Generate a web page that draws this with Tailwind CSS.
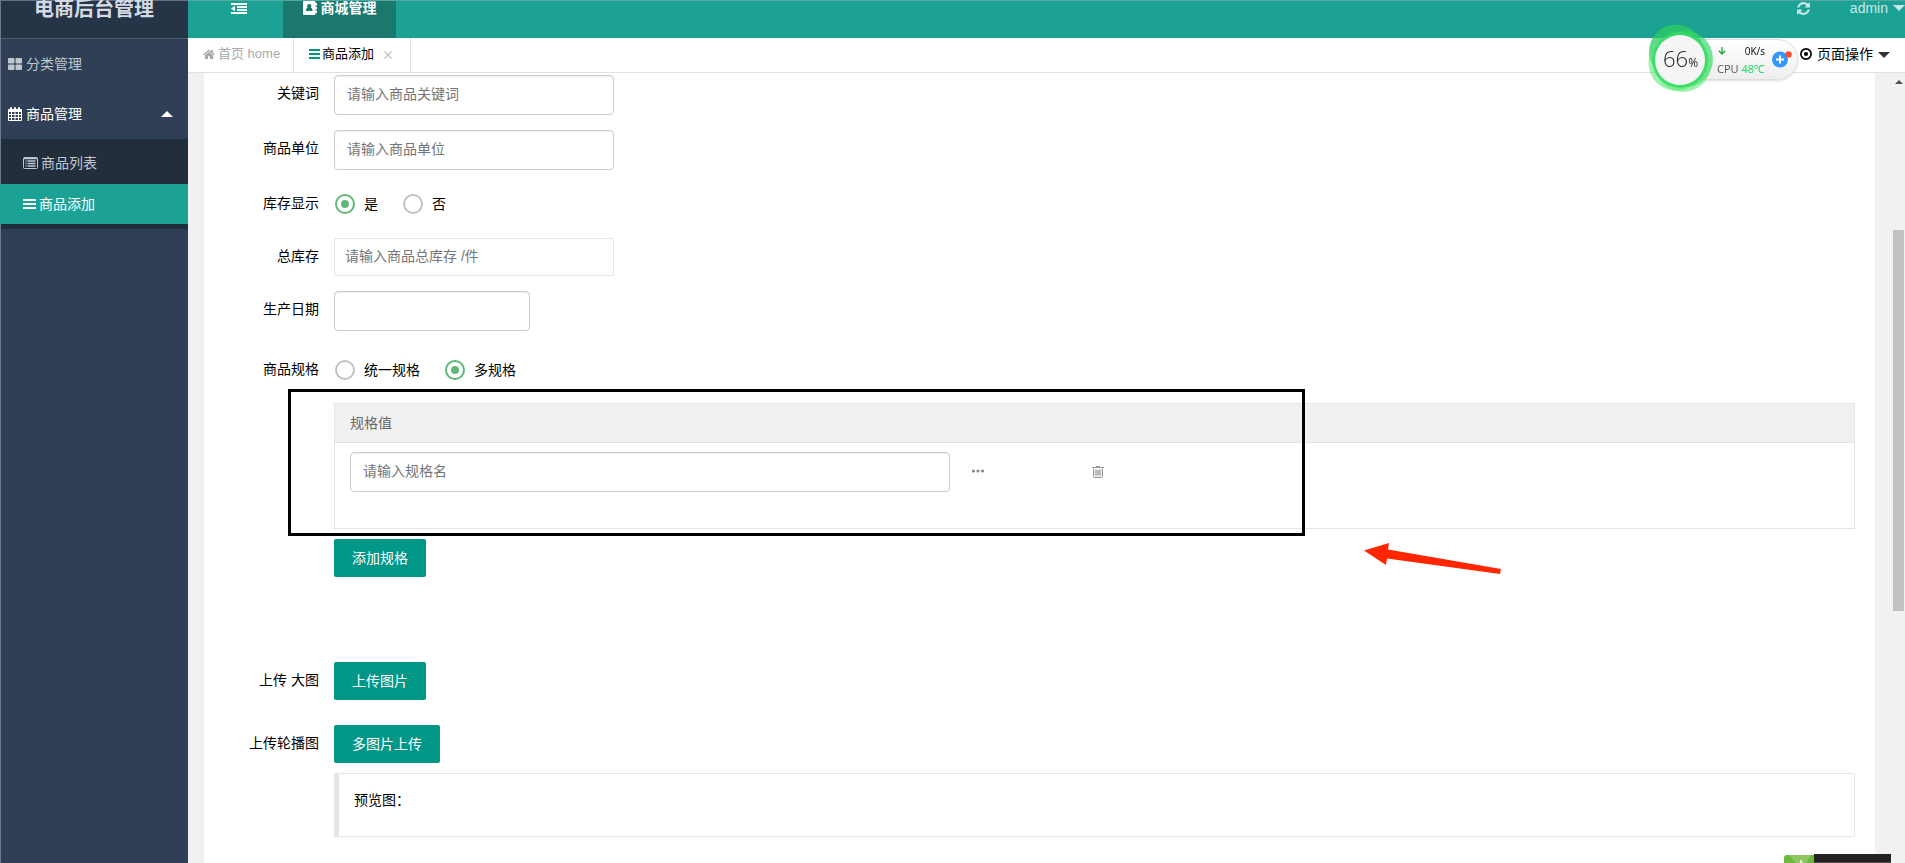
<!DOCTYPE html>
<html lang="zh-CN">
<head>
<meta charset="utf-8">
<meta name="viewport" content="width=device-width, initial-scale=1">
<title>电商后台管理</title>
<script src="https://cdn.jsdelivr.net/npm/@tailwindcss/browser@4"></script>
</head>
<body class="flex min-h-screen bg-[#f1f1f1] font-['Liberation_Sans','Noto_Sans_CJK_SC',sans-serif] text-sm text-black">

<!-- Sidebar -->
<aside class="flex w-[188px] shrink-0 flex-col border-l border-[#6d7988] bg-[#2f4056] text-[#c1c6cd]">
  <h1 class="flex h-[39px] items-start justify-center border-t border-b border-t-[#66717e] border-b-[#4f5d6e] bg-[#253446] pr-px text-xl leading-4 font-bold text-[#d5d9e2]">电商后台管理</h1>
  <nav class="flex flex-col">
    <a href="#" class="flex h-[49px] items-center gap-1 pl-[7px]">
      <svg class="h-3 w-3.5" viewBox="0 0 14 12" fill="currentColor"><rect width="6.5" height="5.5" rx="1"/><rect x="7.5" width="6.5" height="5.5" rx="1"/><rect y="6.5" width="6.5" height="5.5" rx="1"/><rect x="7.5" y="6.5" width="6.5" height="5.5" rx="1"/></svg>
      分类管理
    </a>
    <a href="#" class="flex h-[51px] items-center gap-1 pr-[15px] pl-[7px] text-white">
      <svg class="h-3.5 w-3.5" viewBox="0 0 14 14" fill="currentColor"><path fill-rule="evenodd" d="M1 2h1V1a1 1 0 0 1 2 0v1h2V1a1 1 0 0 1 2 0v1h2V1a1 1 0 0 1 2 0v1h1a1 1 0 0 1 1 1v10a1 1 0 0 1-1 1H1a1 1 0 0 1-1-1V3a1 1 0 0 1 1-1zM1 5v2h2V5zm3 0v2h2.500V5zm3.500 0v2H10V5zM11 5v2h2V5zM1 8v2h2V8zm3 0v2h2.500V8zm3.500 0v2H10V8zM11 8v2h2V8zM1 11v2h2v-2zm3 0v2h2.500v-2zm3.500 0v2H10v-2zM11 11v2h2v-2z"/></svg>
      商品管理
      <svg class="ml-auto h-1.5 w-3" viewBox="0 0 12 6" fill="currentColor"><path d="M0 6 6 0l6 6z"/></svg>
    </a>
    <div class="flex flex-col bg-[#232e3d] py-[5px]">
      <a href="#" class="flex h-10 items-center gap-[3px] pb-0.5 pl-[22px]">
        <svg class="h-3 w-[15px]" viewBox="0 0 15 12"><rect x=".5" y=".5" width="14" height="11" rx="1" fill="none" stroke="currentColor"/><path d="M1 1.500h13M2.500 4h1M4.500 4h8M2.500 6.500h1M4.500 6.500h8M2.500 9h1M4.500 9h8" stroke="currentColor" stroke-width="1.300"/></svg>
        商品列表
      </a>
      <a href="#" class="-ml-px flex h-10 items-center gap-[3px] bg-[#1ca195] pb-px pl-[23px] text-white">
        <svg class="h-2.5 w-[13px]" viewBox="0 0 13 10" fill="currentColor"><rect width="13" height="2" rx=".5"/><rect y="4" width="13" height="2" rx=".5"/><rect y="8" width="13" height="2" rx=".5"/></svg>
        商品添加
      </a>
    </div>
  </nav>
</aside>

<div class="flex min-w-0 flex-1 flex-col">
  <!-- Top bar -->
  <header class="flex h-[38px] items-start border-t border-[#55a8a1] bg-[#1ca195] text-white">
    <button type="button" aria-label="折叠菜单" class="flex h-full w-[95px] items-start justify-center pt-0.5 pl-[7px]">
      <svg class="h-[11px] w-4" viewBox="0 0 16 11" fill="currentColor"><path d="M0 0h16v2H0zM6 3h10v2H6zM6 6h10v2H6zM0 9h16v2H0zM0 5.500 4 2.800v5.400z"/></svg>
    </button>
    <a href="#" class="flex h-full w-[113px] items-start justify-center gap-1 bg-[#1a786f] font-bold leading-[14px]">
      <svg class="h-3.5 w-3.5" viewBox="0 0 14 14" fill="currentColor"><path fill-rule="evenodd" d="M1 0h10.500a1 1 0 0 1 1 1v12a1 1 0 0 1-1 1H1a1 1 0 0 1-1-1V1a1 1 0 0 1 1-1zM6.200 3a2 2 0 0 0-1.500 3.400C3.500 6.900 3 8 3 10h6.500c0-2-.5-3.100-1.700-3.600A2 2 0 0 0 6.200 3z"/><path d="M12 2h2v2.500h-2zM12 5.700h2v2.500h-2zM12 9.400h2V12h-2z"/></svg>
      商城管理
    </a>
    <div class="ml-auto flex items-start text-[#c9e8e5]">
      <button type="button" aria-label="刷新" class="mr-[39px] flex">
        <svg class="h-[15px] w-[15px]" viewBox="0 0 1792 1792" fill="currentColor"><path d="M1639 1056q0 5-1 7-64 268-268 434.500t-478 166.500q-146 0-282.500-55t-243.500-157l-129 129q-19 19-45 19t-45-19-19-45v-448q0-26 19-45t45-19h448q26 0 45 19t19 45-19 45l-137 137q71 66 161 102t187 36q134 0 250-65t186-179q11-17 53-117 8-23 30-23h192q13 0 22.500 9.500t9.500 22.500zm25-800v448q0 26-19 45t-45 19h-448q-26 0-45-19t-19-45 19-45l138-138q-148-137-349-137-134 0-250 65t-186 179q-11 17-53 117-8 23-30 23h-199q-13 0-22.500-9.500t-9.500-22.500v-7q65-268 270-434.500t480-166.500q146 0 284 55.500t245 156.500l130-129q19-19 45-19t45 19 19 45z"/></svg>
      </button>
      <a href="#" class="flex items-center gap-[5px] leading-[14px]">admin
        <svg class="h-1.5 w-3" viewBox="0 0 12 6" fill="currentColor"><path d="M0 0h12L6 6z"/></svg>
      </a>
    </div>
  </header>

  <!-- Page tabs -->
  <div class="flex h-[35px] items-stretch border-b border-[#e2e2e2] bg-white text-[13px]">
    <a href="#" class="flex w-[106px] items-center gap-[3px] border-r border-[#e2e2e2] pb-0.5 pl-[15px] text-[#a8a8a8]">
      <svg class="h-[13px] w-3" viewBox="0 0 1664 1792" fill="currentColor"><path d="M1408 992v480q0 26-19 45t-45 19h-384v-384h-256v384h-384q-26 0-45-19t-19-45v-480q0-1 .5-3t.5-3l575-474 575 474q1 2 1 6zm223-69l-62 74q-8 9-21 11h-3q-13 0-21-7l-692-577-692 577q-12 8-24 7-13-2-21-11l-62-74q-8-10-7-23.500t11-21.500l719-599q32-26 76-26t76 26l244 204v-195q0-14 9-23t23-9h192q14 0 23 9t9 23v408l219 182q10 8 11 21.500t-7 23.500z"/></svg>
      首页 home
    </a>
    <div class="flex w-[117px] items-center gap-0.5 border-r border-[#e2e2e2] pb-0.5 pl-[15px]">
      <svg class="h-2.5 w-[11px] text-[#009688]" viewBox="0 0 11 10" fill="currentColor"><rect width="11" height="2"/><rect y="4" width="11" height="2"/><rect y="8" width="11" height="2"/></svg>
      <a href="#">商品添加</a>
      <button type="button" aria-label="关闭" class="ml-2 pt-0.5 text-[#c2c2c2]">
        <svg class="h-2 w-2" viewBox="0 0 8 8" fill="none" stroke="currentColor" stroke-width="1.200"><path d="M.5.5l7 7M7.500.5l-7 7"/></svg>
      </button>
    </div>
    <button type="button" class="mr-[15px] ml-auto flex items-center gap-[5px] pb-0.5 text-sm">
      <svg class="h-3 w-3" viewBox="0 0 11 11"><circle cx="5.500" cy="5.500" r="4.700" fill="none" stroke="currentColor" stroke-width="1.500"/><circle cx="5.500" cy="5.500" r="1.900" fill="currentColor"/></svg>
      页面操作
      <svg class="mt-0.5 h-1.5 w-3 text-[#333]" viewBox="0 0 12 6" fill="currentColor"><path d="M0 0h12L6 6z"/></svg>
    </button>
  </div>

  <!-- Form area -->
  <div class="flex flex-1">
    <main class="ml-4 min-w-0 flex-1 bg-white">
      <form class="grid grid-cols-[95px_minmax(0,1fr)] gap-x-[15px] px-5 pt-0.5 pb-5">
        <label for="kw" class="pt-2 text-right leading-5">关键词</label>
        <input id="kw" type="text" placeholder="请输入商品关键词" class="mb-[15px] h-10 w-[280px] rounded border border-[#ccc] px-3 pb-0.5 shadow-[inset_0_1px_1px_rgba(0,0,0,0.075)] placeholder:text-[#757575]">

        <label for="unit" class="pt-2 text-right leading-5">商品单位</label>
        <input id="unit" type="text" placeholder="请输入商品单位" class="mb-[15px] h-10 w-[280px] rounded border border-[#ccc] px-3 pb-0.5 shadow-[inset_0_1px_1px_rgba(0,0,0,0.075)] placeholder:text-[#757575]">

        <span id="stock-show" class="pt-2 text-right leading-5">库存显示</span>
        <div role="radiogroup" aria-labelledby="stock-show" class="mb-[15px] flex h-[38px] items-center gap-[25px] pl-px">
          <label class="flex items-center gap-[9px]"><input type="radio" name="show" checked class="flex h-5 w-5 appearance-none items-center justify-center rounded-full border-2 border-[#c2c2c2] checked:border-[#5fb878] checked:before:h-2 checked:before:w-2 checked:before:rounded-full checked:before:bg-[#5fb878]">是</label>
          <label class="flex items-center gap-[9px]"><input type="radio" name="show" class="flex h-5 w-5 appearance-none items-center justify-center rounded-full border-2 border-[#c2c2c2] checked:border-[#5fb878] checked:before:h-2 checked:before:w-2 checked:before:rounded-full checked:before:bg-[#5fb878]">否</label>
        </div>

        <label for="total" class="pt-2 text-right leading-5">总库存</label>
        <input id="total" type="text" placeholder="请输入商品总库存 /件" class="mb-[15px] h-[38px] w-[280px] rounded-xs border border-[#e6e6e6] px-2.5 pb-0.5 placeholder:text-[#757575]">

        <label for="date" class="pt-2 text-right leading-5">生产日期</label>
        <input id="date" type="text" class="mb-5 h-10 w-[196px] rounded border border-[#ccc] px-3 shadow-[inset_0_1px_1px_rgba(0,0,0,0.075)]">

        <span id="spec" class="pt-2 text-right leading-5">商品规格</span>
        <div role="radiogroup" aria-labelledby="spec" class="mb-[14px] flex h-[38px] items-center gap-[25px] pl-px">
          <label class="flex items-center gap-[9px]"><input type="radio" name="spec" class="flex h-5 w-5 appearance-none items-center justify-center rounded-full border-2 border-[#c2c2c2] checked:border-[#5fb878] checked:before:h-2 checked:before:w-2 checked:before:rounded-full checked:before:bg-[#5fb878]">统一规格</label>
          <label class="flex items-center gap-[9px]"><input type="radio" name="spec" checked class="flex h-5 w-5 appearance-none items-center justify-center rounded-full border-2 border-[#c2c2c2] checked:border-[#5fb878] checked:before:h-2 checked:before:w-2 checked:before:rounded-full checked:before:bg-[#5fb878]">多规格</label>
        </div>

        <section class="relative col-start-2 mb-[85px]">
          <div class="border border-[#e6e6e6]">
            <h2 class="h-[39px] border-b border-[#e2e2e2] bg-[#f1f1f1] pl-[15px] leading-[38px] text-[#666]">规格值</h2>
            <div class="flex items-center pt-[9px] pb-9 pl-[15px] text-[#999]">
              <input type="text" aria-label="规格名" placeholder="请输入规格名" class="h-10 w-[600px] rounded border border-[#ccc] px-3 pb-0.5 text-black shadow-[inset_0_1px_1px_rgba(0,0,0,0.075)] placeholder:text-[#757575]">
              <button type="button" aria-label="更多" class="ml-[22px]">
                <svg class="h-3 w-3" viewBox="0 0 12 12" fill="#8c8c8c"><circle cx="1.500" cy="5" r="1.600"/><circle cx="6" cy="5" r="1.600"/><circle cx="10.500" cy="5" r="1.600"/></svg>
              </button>
              <button type="button" aria-label="删除" class="ml-[108px]">
                <svg class="h-3 w-3" viewBox="0 0 12 12" fill="none" stroke="currentColor"><path d="M0 1.500h12M4 .5h4"/><path d="M1.500 2.500v8q0 1 1 1h7q1 0 1-1v-8" fill="#eee"/><path d="M4 4v5.500M6 4v5.500M8 4v5.500" stroke-width="1.200"/></svg>
              </button>
            </div>
          </div>
          <button type="button" class="mt-[10px] h-[38px] rounded-xs bg-[#009688] px-[18px] text-white">添加规格</button>

          <!-- Callout frame and arrow -->
          <div class="pointer-events-none absolute -top-3.5 -left-[46px] h-[147px] w-[1017px] border-3 border-black"></div>
          <svg class="pointer-events-none absolute top-[139px] left-[1030px] h-8 w-[138px]" viewBox="0 0 138 32" fill="#ff2600"><path d="M0 8.500 25 1l-1 6.500L137 27l-1 5L23 16.500 22 23z"/></svg>
        </section>

        <label for="single" class="pt-2 text-right leading-5">上传 大图</label>
        <div class="mb-[25px]"><button id="single" type="button" class="block h-[38px] rounded-xs bg-[#009688] px-[18px] text-white">上传图片</button></div>

        <label for="multi" class="pt-2 text-right leading-5">上传轮播图</label>
        <div class="mb-[10px]"><button id="multi" type="button" class="block h-[38px] rounded-xs bg-[#009688] px-[18px] text-white">多图片上传</button></div>

        <blockquote class="col-start-2 h-16 rounded-r-xs border border-l-[5px] border-[#e6e6e6] px-[15px] pt-[15px] leading-[22px]">预览图：</blockquote>
      </form>
    </main>
    <!-- Gutter and scrollbar -->
    <div class="flex w-[30px] shrink-0 flex-col items-end pt-[7px] pr-px">
      <svg class="mr-px h-1 w-2" viewBox="0 0 8 4" fill="#505050"><path d="M0 4 4 0l4 4z"/></svg>
      <div class="mt-[146px] h-[381px] w-[11px] bg-[#c1c1c1]"></div>
    </div>
  </div>
</div>

<!-- System monitor widget -->
<div class="fixed top-6 right-[107px] h-[68px] w-[150px] font-['Open_Sans','Noto_Sans',sans-serif]">
  <div class="absolute top-[15px] right-0 left-10 h-[41px] rounded-r-full border border-[#ddd] bg-linear-to-b from-white to-[#eee] shadow"></div>
  <svg class="absolute top-0 left-0 h-[68px] w-[66px]" viewBox="0 0 66 68">
    <circle cx="28" cy="27.500" r="27" fill="#2dcc5f" fill-opacity=".75"/>
    <circle cx="36.500" cy="35" r="28.500" fill="#35d568" fill-opacity=".65"/>
    <circle cx="28.500" cy="39" r="28" fill="#5fe878" fill-opacity=".6"/>
    <circle cx="35" cy="40" r="28" fill="#5fe878" fill-opacity=".6"/>
    <circle cx="32" cy="36" r="28" fill="#37da66" fill-opacity=".8"/>
    <circle cx="32" cy="36" r="25" fill="#f5f5f5"/>
  </svg>
  <div class="absolute top-[18px] left-[15px] flex items-baseline text-[22px] leading-8 font-light text-[#222]">66<span class="text-xs font-normal">%</span></div>
  <div class="absolute top-5 left-[70px] flex w-[47px] items-center justify-between text-[10px] leading-[14px] font-medium">
    <svg class="h-2 w-2" viewBox="0 0 8 8" fill="none" stroke="#1fa83c" stroke-width="1.300"><path d="M4 0v7M.8 3.800 4 7l3.200-3.200"/></svg>
    0K/s
  </div>
  <div class="absolute top-[38px] left-[69px] flex w-12 justify-between text-[11px] leading-[14px] text-[#555]">CPU<span class="text-[#19d862]">48℃</span></div>
  <svg class="absolute top-[26px] left-[124px] h-[18px] w-5" viewBox="0 0 20 18"><circle cx="8" cy="9.500" r="8" fill="#3597fb"/><path d="M8 5.500v8M4 9.500h8" stroke="#fff" stroke-width="2"/><circle cx="16.500" cy="4.500" r="3.300" fill="#f9502d"/></svg>
</div>

<!-- Desktop overlay at the lower edge -->
<div class="fixed right-3.5 bottom-0 flex items-end">
  <svg class="h-2 w-[30px]" viewBox="0 0 30 8"><path d="M0 8V3q0-3 3-3h27v8z" fill="#6db83c"/><path d="M5 0h22l-5 8H12z" fill="#8cc65c"/><path d="m17 4 1.500 4h-3z" fill="#fff"/></svg>
  <div class="h-[9px] w-[77px] border-b border-[#5a4f50] bg-[#222]"></div>
</div>
</body>
</html>
